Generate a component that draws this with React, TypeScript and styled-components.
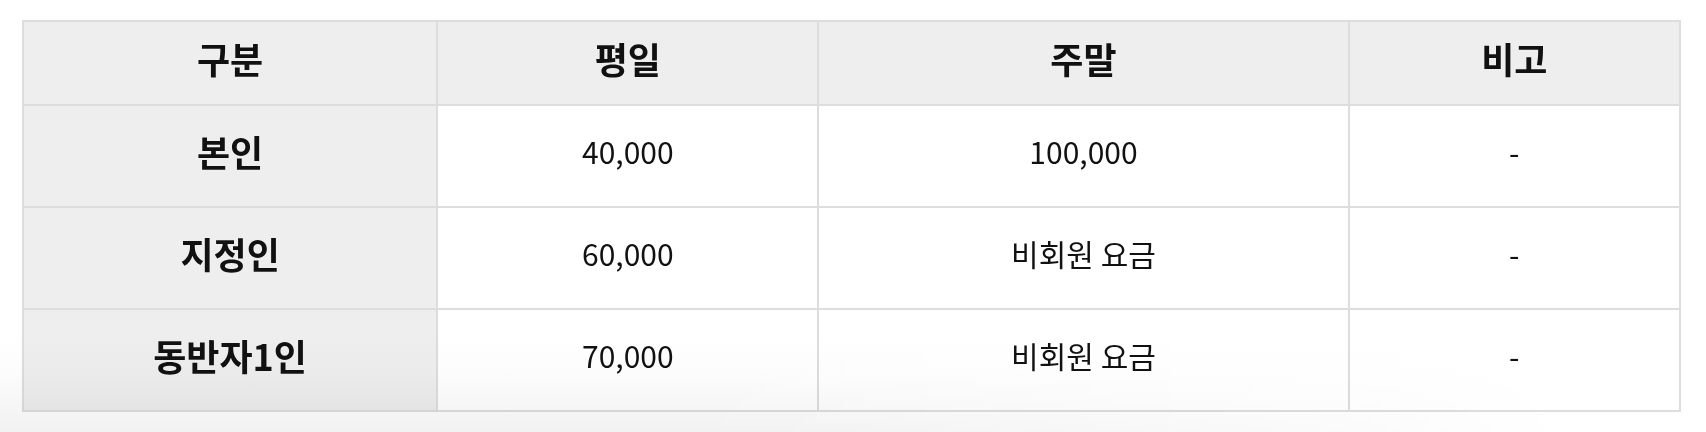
import React from 'react';
import styled, { createGlobalStyle } from 'styled-components';

const GlobalStyle = createGlobalStyle`
  html, body {
    margin: 0;
    padding: 0;
    background: #fff;
  }
  body {
    font-family: 'Noto Sans CJK KR', 'Noto Sans', sans-serif;
    color: #111;
  }
`;

type rowType = {
  label: string;
  weekday: string;
  weekend: string;
  note: string;
};

const columns = [25, 23, 32, 20];
const heads = ['구분', '평일', '주말', '비고'];

const rows: rowType[] = [
  { label: '본인', weekday: '40,000', weekend: '100,000', note: '-' },
  { label: '지정인', weekday: '60,000', weekend: '비회원 요금', note: '-' },
  { label: '동반자1인', weekday: '70,000', weekend: '비회원 요금', note: '-' },
];

export default function App() {
  return (
    <>
      <GlobalStyle />
      <Page>
        <PriceTable>
          <colgroup>
            {columns.map((w, i) => (
              <Column key={i} $w={w} />
            ))}
          </colgroup>
          <thead>
            <tr>
              {heads.map((h) => (
                <HeadCell key={h}>{h}</HeadCell>
              ))}
            </tr>
          </thead>
          <tbody>
            {rows.map((row) => (
              <BodyRow key={row.label}>
                <LabelCell>{row.label}</LabelCell>
                <Cell>{row.weekday}</Cell>
                <Cell>{row.weekend}</Cell>
                <Cell>{row.note}</Cell>
              </BodyRow>
            ))}
          </tbody>
        </PriceTable>
        <BottomFade />
      </Page>
    </>
  );
}

const Page = styled.div`
  position: relative;
  width: 1706px;
  height: 432px;
  padding: 20px 0 0 22px;
  box-sizing: border-box;
  overflow: hidden;
`;

const PriceTable = styled.table`
  width: 1659px;
  border-collapse: collapse;
  table-layout: fixed;
  line-height: 1.3;
`;

const Column = styled.col<{ $w: number }>`
  width: ${(p) => p.$w}%;
`;

const BodyRow = styled.tr`
  background: #fff;
`;

const HeadCell = styled.th`
  height: 73px;
  padding: 0 0 9px;
  background: #eeeeee;
  border: 2px solid #dddddd;
  font-size: 36px;
  font-weight: 700;
  text-align: center;
  vertical-align: middle;
`;

const Cell = styled.td`
  height: 91px;
  padding: 0 0 9px;
  border: 2px solid #dddddd;
  font-size: 30px;
  font-weight: 400;
  text-align: center;
  vertical-align: middle;
`;

const LabelCell = styled(Cell)`
  background: #eeeeee;
  font-size: 36px;
  font-weight: 700;
`;

const BottomFade = styled.div`
  position: absolute;
  left: 0;
  right: 0;
  bottom: 0;
  height: 100px;
  pointer-events: none;
  mix-blend-mode: multiply;
  background: linear-gradient(to top, #f1f1f1 0%, #f6f6f6 25%, #fcfcfc 60%, #fff 100%);
  -webkit-mask-image: linear-gradient(to right, #000 0%, #000 40%, rgba(0, 0, 0, 0.3) 80%, transparent 92%);
  mask-image: linear-gradient(to right, #000 0%, #000 40%, rgba(0, 0, 0, 0.3) 80%, transparent 92%);
`;
